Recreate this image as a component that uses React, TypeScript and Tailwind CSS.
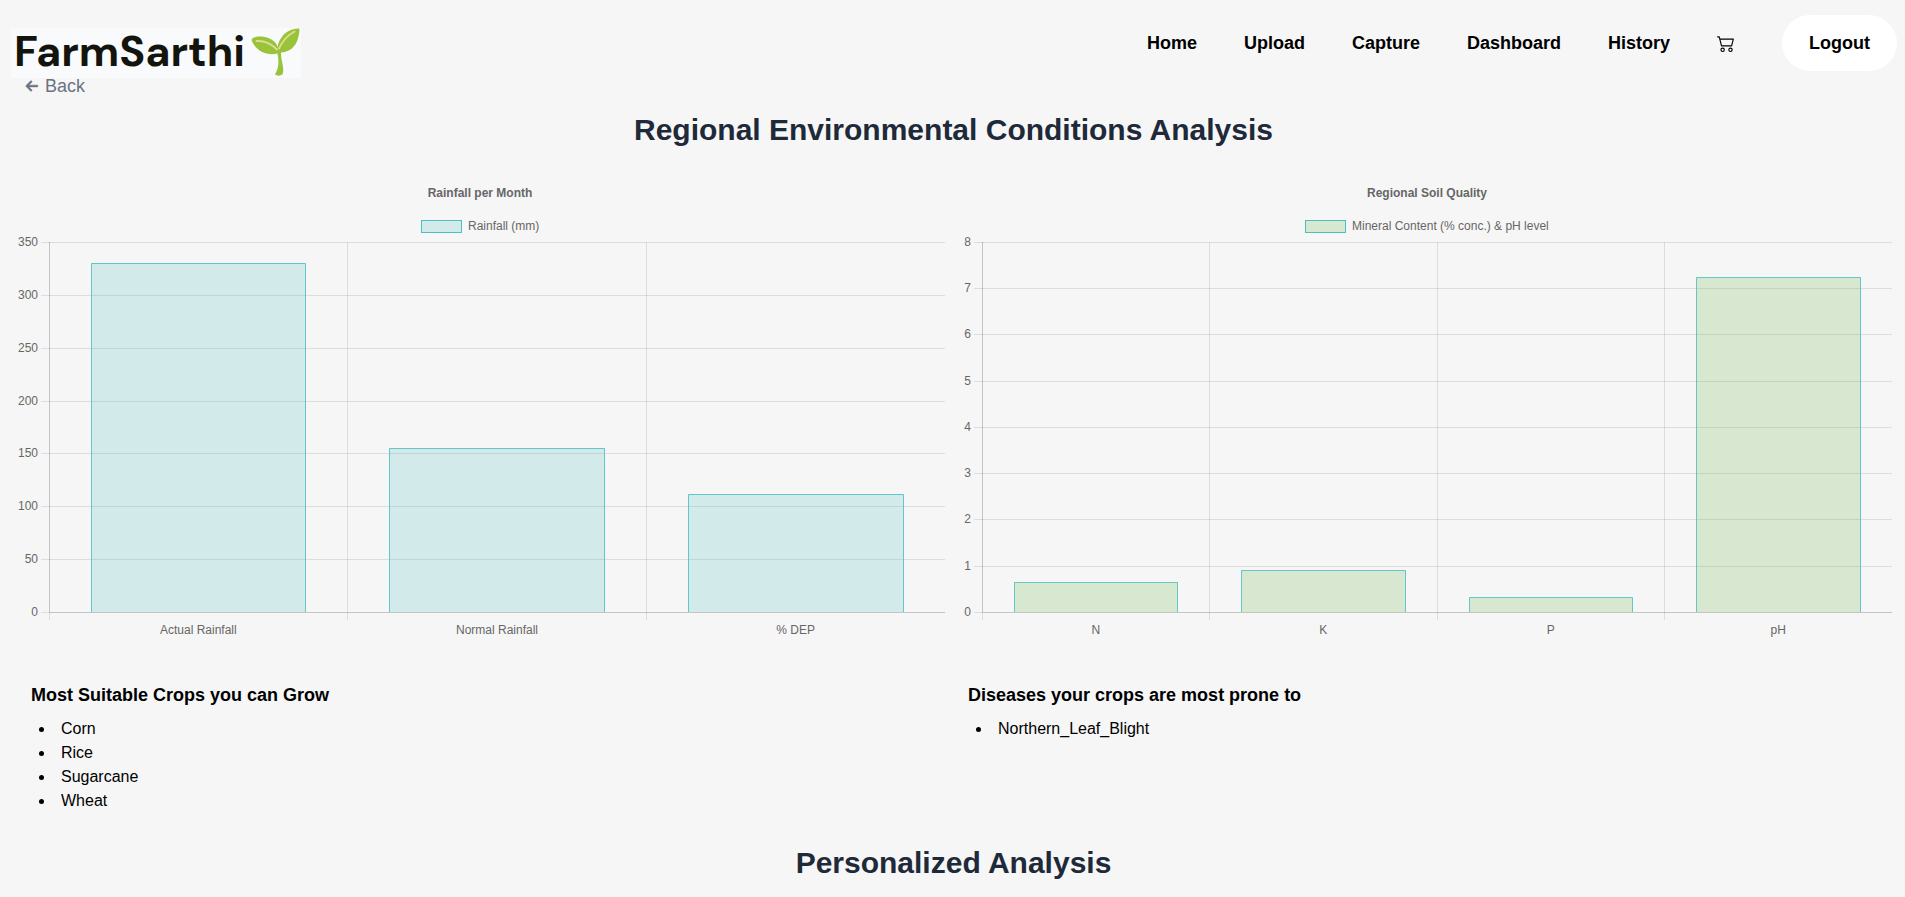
import { BsCart2 } from "react-icons/bs";
import { FaArrowLeft } from "react-icons/fa6";

type Bar = { label: string; value: number };

type ChartProps = {
  title: string;
  legend: string;
  legendWidth: number;
  bars: Bar[];
  max: number;
  step: number;
  axisX: number;
  fill: string;
};

const TOP = 72;
const BOTTOM = 442;
const RIGHT = 932;
const FONT = "font-['Liberation_Sans',Arial,sans-serif] text-[12px]";

function BarChart({ title, legend, legendWidth, bars, max, step, axisX, fill }: ChartProps) {
  const ticks = Array.from({ length: max / step + 1 }, (_, i) => i * step);
  const yOf = (v: number) => Math.ceil(BOTTOM - ((BOTTOM - TOP) * v) / max - 0.5) + 0.5;
  const slot = (RIGHT - axisX) / bars.length;
  const barWidth = slot * 0.72;
  const legendX = Math.round(467 - (47 + legendWidth) / 2);

  return (
    <svg viewBox="0 0 933 470" className="block h-auto w-full" role="img" aria-label={title}>
      <g className={FONT} fill="#666666">
        <text x={467} y={27} textAnchor="middle" className="font-bold">
          {title}
        </text>
        <rect x={legendX + 0.5} y={50.5} width={40} height={12} fill={fill} stroke="#4bc0c0" />
        <text x={legendX + 47} y={60}>
          {legend}
        </text>
        {ticks.map((t) => {
          const y = yOf(t);
          return (
            <g key={t}>
              <line x1={axisX - 8} x2={t === 0 ? axisX : RIGHT} y1={y} y2={y} stroke="#000" strokeOpacity={0.1} />
              <text x={axisX - 11} y={y + 3.5} textAnchor="end">
                {t}
              </text>
            </g>
          );
        })}
        {bars.map((b, i) => {
          const x = Math.floor(axisX + slot * i) + 0.5;
          return (
            <g key={b.label}>
              <line x1={x} x2={x} y1={i === 0 ? BOTTOM : TOP} y2={BOTTOM + 8} stroke="#000" strokeOpacity={0.1} />
              <text x={axisX + slot * (i + 0.5)} y={464} textAnchor="middle">
                {b.label}
              </text>
            </g>
          );
        })}
      </g>
      {bars.map((b, i) => {
        const left = Math.round(axisX + slot * (i + 0.5) - barWidth / 2) + 0.5;
        const right = Math.floor(axisX + slot * (i + 0.5) + barWidth / 2) + 0.5;
        const y = yOf(b.value);
        return (
          <g key={b.label}>
            <rect x={left} y={y} width={right - left} height={BOTTOM - y} fill={fill} />
            <path d={`M${left} ${BOTTOM}V${y}H${right}V${BOTTOM}`} fill="none" stroke="#4bc0c0" strokeOpacity={0.85} />
          </g>
        );
      })}
      <path d={`M${axisX + 0.5} ${TOP}V${BOTTOM + 0.5}H${RIGHT}`} fill="none" stroke="#000" strokeOpacity={0.2} />
    </svg>
  );
}

function Sprout() {
  return (
    <svg viewBox="0 0 50 50" className="h-[50px] w-[50px]" aria-hidden="true">
      <path
        d="M0.500 12C2 9 6 8 11 8.500C19 9.500 25 13 26.500 19C28 9 37 0 48 0.500C48.500 1 48.500 2 48.300 4C47 16 41 24 30 24.500C29.500 32 34 40 31.500 46.500C29 48 26 48 24 46.500C28 40 28 33 26.500 25.500C15 28 5 23 0.500 12Z"
        fill="#98c33b"
      />
      <path
        d="M5.500 13C13 12.500 20 15.500 26 21.500M28 20.500C31 14 37 7 43.500 3.500"
        fill="none"
        stroke="#e0dc8c"
        strokeWidth="1.9"
        strokeLinecap="round"
      />
    </svg>
  );
}

const links = ["Home", "Upload", "Capture", "Dashboard", "History"];

function Crops({ title, items }: { title: string; items: string[] }) {
  return (
    <section>
      <h2 className="mb-2 text-lg font-bold">{title}</h2>
      <ul className="list-inside list-disc">
        {items.map((item) => (
          <li key={item} className="pl-2">
            {item}
          </li>
        ))}
      </ul>
    </section>
  );
}

export default function App() {
  return (
    <div className="min-h-screen bg-[#f6f6f6] font-['Liberation_Sans',Arial,sans-serif] text-black">
      <header className="flex h-[78px] items-start justify-between pl-[11px] pr-2">
        <a
          href="#"
          aria-label="FarmSarthi"
          className="mt-7 flex h-[50px] w-[290px] items-center justify-between bg-[#f8fafc] pl-[3px] font-['DM_Sans',Inter,sans-serif] text-[43px] leading-none font-bold text-[#14140f]"
        >
          <span className="pb-1">FarmSarthi</span>
          <Sprout />
        </a>
        <nav className="mt-[15px] flex items-center gap-[47px] text-lg font-bold">
          {links.map((l) => (
            <a key={l} href="#">
              {l}
            </a>
          ))}
          <a href="#" aria-label="Cart">
            <BsCart2 size={18} />
          </a>
          <button type="button" className="h-14 rounded-[28px] bg-white px-[27px]">
            Logout
          </button>
        </nav>
      </header>
      <main>
        <a href="#" className="ml-[25px] flex h-4 w-fit items-center gap-1.5 text-lg leading-4 text-gray-500">
          <FaArrowLeft size={14} className="stroke-current stroke-[20px]" />
          Back
        </a>
        <h1 className="mt-[18px] pl-0.5 text-center text-3xl font-bold text-gray-800">
          Regional Environmental Conditions Analysis
        </h1>
        <div className="mt-[22px] grid grid-cols-2 gap-[14px] pl-[13px] pr-3">
          <BarChart
            title="Rainfall per Month"
            legend="Rainfall (mm)"
            legendWidth={72}
            max={350}
            step={50}
            axisX={36}
            fill="rgba(75,192,192,0.2)"
            bars={[
              { label: "Actual Rainfall", value: 330 },
              { label: "Normal Rainfall", value: 155.5 },
              { label: "% DEP", value: 112 },
            ]}
          />
          <BarChart
            title="Regional Soil Quality"
            legend="Mineral Content (% conc.) & pH level"
            legendWidth={197}
            max={8}
            step={1}
            axisX={22}
            fill="rgba(95,175,60,0.2)"
            bars={[
              { label: "N", value: 0.65 },
              { label: "K", value: 0.91 },
              { label: "P", value: 0.33 },
              { label: "pH", value: 7.25 },
            ]}
          />
        </div>
        <div className="mt-[41px] grid grid-cols-2 pl-[31px]">
          <Crops title="Most Suitable Crops you can Grow" items={["Corn", "Rice", "Sugarcane", "Wheat"]} />
          <Crops title="Diseases your crops are most prone to" items={["Northern_Leaf_Blight"]} />
        </div>
        <h1 className="mt-8 pl-0.5 text-center text-3xl font-bold text-gray-800">Personalized Analysis</h1>
      </main>
    </div>
  );
}
